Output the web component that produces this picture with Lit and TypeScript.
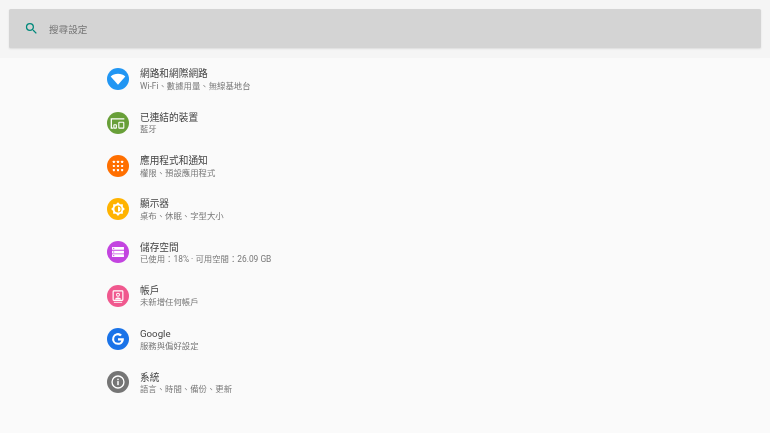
import { LitElement, html, css, svg } from "lit";
import { customElement } from "lit/decorators.js";

const icons: Record<string, unknown> = {
  wifi: svg`<path d="M12 18.200 4 9.200C6.100 7.300 8.800 6.300 12 6.300s5.900 1 8 2.900z" fill="#fff"/>`,
  devices: svg`<path d="M4 6.900h14.900v1.400H5.400v8.500h1.500v1.400H4z" fill="#fff"/><rect x="7.500" y="13.900" width="2.700" height="3.700" rx=".4" fill="none" stroke="#fff" stroke-width="1.200"/><rect x="12.900" y="11.200" width="5.400" height="6.400" rx=".5" fill="none" stroke="#fff" stroke-width="1.200"/>`,
  apps: svg`<g fill="#fff">${[7.5, 12, 16.5].flatMap((y) => [7.5, 12, 16.5].map((x) => svg`<rect x="${x - 1.1}" y="${y - 1.1}" width="2.200" height="2.200" rx=".5"/>`))}</g>`,
  display: svg`<path d="M12 4.500l2.200 2.200h3.100v3.100L19.500 12l-2.200 2.200v3.100h-3.100L12 19.500l-2.200-2.200H6.700v-3.100L4.500 12l2.200-2.200V6.700h3.100z" fill="#fff"/><circle cx="12" cy="12" r="3.900" fill="#ffb300"/><path d="M12 9.200a2.800 2.800 0 0 1 0 5.600z" fill="#fff"/>`,
  storage: svg`<g fill="#fff"><rect x="5.500" y="6.500" width="13" height="3" rx=".3"/><rect x="5.500" y="10.500" width="13" height="3" rx=".3"/><rect x="5.500" y="14.500" width="13" height="3" rx=".3"/></g><g fill="#c344e0"><rect x="6.600" y="7.500" width="1.300" height="1"/><rect x="6.600" y="11.500" width="1.300" height="1"/><rect x="6.600" y="15.500" width="1.300" height="1"/></g>`,
  account: svg`<rect x="6.700" y="6.500" width="10.600" height="10.200" rx=".8" fill="none" stroke="#fff" stroke-width="1.300"/><circle cx="12" cy="10.700" r="1.600" fill="none" stroke="#fff" stroke-width="1.100"/><path d="M8.500 15.800c.6-1.500 2-2.100 3.500-2.100s2.900.6 3.500 2.100z" fill="#fff"/><path d="M7.500 18.900h9" stroke="#fff" stroke-width="1"/>`,
  google: svg`<path d="M18.400 11.900c0 3.700-2.700 6.500-6.400 6.500a6.400 6.400 0 1 1 4.300-11.100l-1.900 1.800A3.800 3.800 0 0 0 12 7.800a4.200 4.200 0 0 0 0 8.400c2.200 0 3.300-1.200 3.600-2.700H12v-2.400h6.300c.1.300.1.500.1.800z" fill="#fff"/>`,
  info: svg`<circle cx="12" cy="12" r="6.500" fill="none" stroke="#fff" stroke-width="1.500"/><rect x="11.200" y="11" width="1.600" height="4.400" fill="#fff"/><rect x="11.200" y="8.400" width="1.600" height="1.600" fill="#fff"/>`,
};

const rows = [
  { icon: "wifi", color: "#2196f3", title: "網路和網際網路", sub: "Wi-Fi、數據用量、無線基地台" },
  { icon: "devices", color: "#689f38", title: "已連結的裝置", sub: "藍牙" },
  { icon: "apps", color: "#ff6f00", title: "應用程式和通知", sub: "權限、預設應用程式" },
  { icon: "display", color: "#ffb300", title: "顯示器", sub: "桌布、休眠、字型大小" },
  { icon: "storage", color: "#c344e0", title: "儲存空間", sub: "已使用：18% · 可用空間：26.09 GB" },
  { icon: "account", color: "#f0588e", title: "帳戶", sub: "未新增任何帳戶" },
  { icon: "google", color: "#1a73e8", title: "Google", sub: "服務與偏好設定" },
  { icon: "info", color: "#757575", title: "系統", sub: "語言、時間、備份、更新" },
];

@customElement("app-root")
export class AppRoot extends LitElement {
  static styles = css`
    :host {
      display: block;
      width: 770px;
      height: 433px;
      overflow: hidden;
      background: #fafafa;
      font-family: Roboto, "Noto Sans CJK TC", sans-serif;
    }
    .head {
      height: 57.600px;
      box-sizing: border-box;
      padding: 9.200px 9px;
      background: #f5f5f5;
    }
    .search {
      height: 38.800px;
      display: flex;
      align-items: center;
      gap: 10px;
      padding-left: 15px;
      background: #d4d4d4;
      border-radius: 1.500px;
      box-shadow: 0 1px 2px rgba(0, 0, 0, 0.1);
      font-size: 9.600px;
      color: #757575;
    }
    .search span,
    .text {
      filter: blur(0.35px);
    }
    .search svg {
      width: 15px;
      height: 15px;
      display: block;
    }
    .list {
      display: flex;
      flex-direction: column;
      padding-left: 107px;
    }
    .row {
      height: 43.300px;
      display: flex;
      align-items: center;
      gap: 11px;
    }
    .ic {
      width: 22px;
      height: 22px;
      border-radius: 50%;
      flex: none;
      display: block;
    }
    .text {
      padding-top: 1.500px;
    }
    .title {
      font-size: 9.700px;
      line-height: 13px;
      margin-bottom: 0.500px;
      color: #444;
    }
    .sub {
      font-size: 8.400px;
      line-height: 11.500px;
      color: #787878;
    }
  `;

  render() {
    return html`
      <div class="head">
        <div class="search">
          <svg viewBox="0 0 24 24" fill="#00897b">
            <path d="M15.500 14h-.79l-.28-.27A6.470 6.470 0 0 0 16 9.500 6.500 6.500 0 1 0 9.500 16c1.610 0 3.090-.59 4.230-1.570l.27.28v.79l5 4.990L20.490 19l-4.990-5zm-6 0C7.010 14 5 11.990 5 9.500S7.010 5 9.500 5 14 7.010 14 9.500 11.990 14 9.500 14z"/>
          </svg>
          <span>搜尋設定</span>
        </div>
      </div>
      <div class="list">
        ${rows.map(
          (r) => html`
            <div class="row">
              <svg class="ic" viewBox="0 0 24 24" style="background:${r.color}">${icons[r.icon]}</svg>
              <div class="text">
                <div class="title">${r.title}</div>
                <div class="sub">${r.sub}</div>
              </div>
            </div>
          `
        )}
      </div>
    `;
  }
}
